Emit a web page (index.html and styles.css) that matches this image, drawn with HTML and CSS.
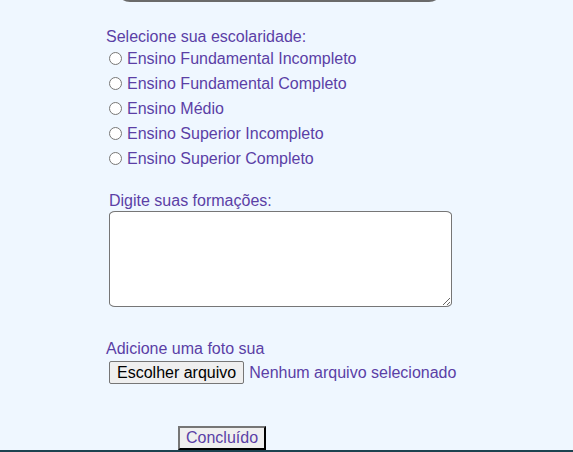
FILE: index.html
```html
<!DOCTYPE html>
<html lang="pt-BR">
<head>
<meta charset="utf-8">
<title>Formulário</title>
<link rel="stylesheet" href="styles.css">
</head>
<body>
<div class="prev-field"></div>
<form class="form">
  <p class="title">Selecione sua escolaridade:</p>
  <div class="options">
    <label class="option"><input type="radio" name="esc" class="radio"><span>Ensino Fundamental Incompleto</span></label>
    <label class="option"><input type="radio" name="esc" class="radio"><span>Ensino Fundamental Completo</span></label>
    <label class="option"><input type="radio" name="esc" class="radio"><span>Ensino Médio</span></label>
    <label class="option"><input type="radio" name="esc" class="radio"><span>Ensino Superior Incompleto</span></label>
    <label class="option"><input type="radio" name="esc" class="radio"><span>Ensino Superior Completo</span></label>
  </div>
  <label class="field-label" for="formacoes">Digite suas formações:</label>
  <textarea id="formacoes" class="notes"></textarea>
  <p class="photo-label">Adicione uma foto sua</p>
  <div class="file-row">
    <button type="button" class="file-btn">Escolher arquivo</button>
    <span class="file-status">Nenhum arquivo selecionado</span>
  </div>
  <button type="button" class="submit">Concluído</button>
</form>
<footer class="footer"></footer>
</body>
</html>
```
FILE: styles.css
```css
html, body {
  margin: 0;
  padding: 0;
}
body {
  background: #eff7ff;
  font-family: "Liberation Sans", Arial, sans-serif;
  font-size: 16px;
  line-height: 18px;
  color: #5b3fa6;
  overflow: hidden;
  height: 452px;
}
.prev-field {
  box-sizing: border-box;
  width: 327px;
  height: 20px;
  margin: -18px 0 0 116px;
  border: 2px solid #6a6a6a;
  border-radius: 0 0 14px 14px;
  background: #fff;
}
.form {
  display: flex;
  flex-direction: column;
  align-items: flex-start;
  padding-left: 106px;
}
.title {
  margin: 26px 0 0 0;
}
.options {
  display: flex;
  flex-direction: column;
}
.option {
  display: flex;
  align-items: center;
  height: 25px;
}
.radio {
  width: 13px;
  height: 13px;
  margin: 0 5px 0 3px;
}
.field-label {
  margin: 20px 0 0 3px;
  line-height: 19px;
}
.notes {
  box-sizing: border-box;
  display: block;
  width: 343px;
  height: 96px;
  margin: 1px 0 0 3px;
  border: 1px solid #767676;
  border-radius: 6px / 4px;
  background: #fff;
}
.photo-label {
  margin: 33px 0 0 0;
}
.file-row {
  display: flex;
  align-items: center;
  margin: 3px 0 0 3px;
}
.file-btn {
  font: inherit;
  line-height: 19px;
  color: #000;
  background: #efefef;
  border: 1px solid #767676;
  border-radius: 2px;
  padding: 1px 7px;
  margin: 0 5px 0 0;
}
.file-status {
  line-height: 19px;
}
.submit {
  font: inherit;
  line-height: 18px;
  color: inherit;
  background: #efefef;
  border: 2px outset #767676;
  border-right-color: #222;
  border-bottom-color: #222;
  padding: 1px 6px;
  margin: 42px 0 0 72px;
}
.footer {
  height: 2px;
  background: #1c4350;
}
```
